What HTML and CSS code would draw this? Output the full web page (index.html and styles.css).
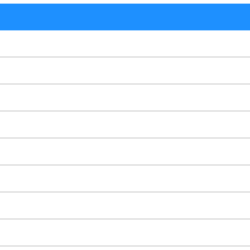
FILE: index.html
```html
<!DOCTYPE html>
<html>
<head>
<meta charset="utf-8">
<link rel="stylesheet" href="styles.css">
</head>
<body>
<div class="table">
  <div class="head"></div>
  <div class="row"></div>
  <div class="row"></div>
  <div class="row"></div>
  <div class="row"></div>
  <div class="row"></div>
  <div class="row"></div>
  <div class="row"></div>
  <div class="row"></div>
</div>
</body>
</html>
```
FILE: styles.css
```css
html, body {
  margin: 0;
  padding: 0;
  background: #ffffff;
  font-family: "Liberation Sans", Arial, sans-serif;
}
.table {
  display: flex;
  flex-direction: column;
  padding-top: 3px;
}
.head {
  height: 26px;
  background: #1e90ff;
  border-top: 1px solid #a8d4ff;
  border-bottom: 1px solid #a8d4ff;
}
.row {
  height: 25px;
  border-bottom: 2px solid #e8e8e8;
}
```
